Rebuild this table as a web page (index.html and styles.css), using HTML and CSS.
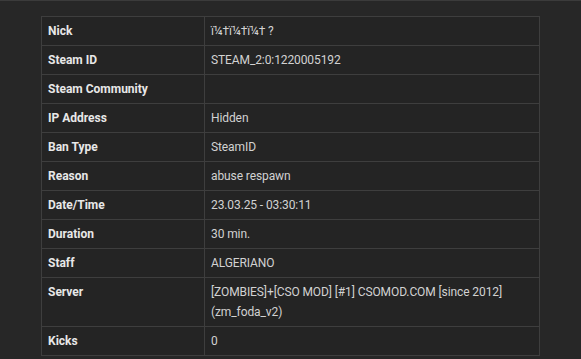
FILE: index.html
```html
<!DOCTYPE html>
<html>
<head>
<meta charset="utf-8">
<link rel="stylesheet" href="styles.css">
</head>
<body>
<div class="page">
  <table class="ban-info">
    <tbody>
      <tr><th>Nick</th><td>ï¼†ï¼†ï¼† ?</td></tr>
      <tr><th>Steam ID</th><td>STEAM_2:0:1220005192</td></tr>
      <tr><th>Steam Community</th><td></td></tr>
      <tr><th>IP Address</th><td>Hidden</td></tr>
      <tr><th>Ban Type</th><td>SteamID</td></tr>
      <tr><th>Reason</th><td>abuse respawn</td></tr>
      <tr><th>Date/Time</th><td>23.03.25 - 03:30:11</td></tr>
      <tr><th>Duration</th><td>30 min.</td></tr>
      <tr><th>Staff</th><td>ALGERIANO</td></tr>
      <tr><th>Server</th><td>[ZOMBIES]+[CSO MOD] [#1] CSOMOD.COM [since 2012] (zm_foda_v2)</td></tr>
      <tr><th>Kicks</th><td>0</td></tr>
    </tbody>
  </table>
</div>
</body>
</html>
```
FILE: styles.css
```css
html, body {
  margin: 0;
  padding: 0;
  background: #272727;
  font-family: Roboto, "Liberation Sans", sans-serif;
  font-size: 12px;
}

.page {
  border-top: 1px solid #3b3b3b;
  padding: 15px 41px 0 41px;
}

.ban-info {
  width: 499px;
  border-collapse: collapse;
  background: #242424;
}

.ban-info th,
.ban-info td {
  border: 1px solid #3e3e3e;
  padding: 4px 6px;
  line-height: 20px;
  text-align: left;
  vertical-align: top;
}

.ban-info th {
  width: 150px;
  font-weight: bold;
  color: #e8e8e8;
}

.ban-info td {
  color: #d2d2d2;
  letter-spacing: -0.1px;
}
```
